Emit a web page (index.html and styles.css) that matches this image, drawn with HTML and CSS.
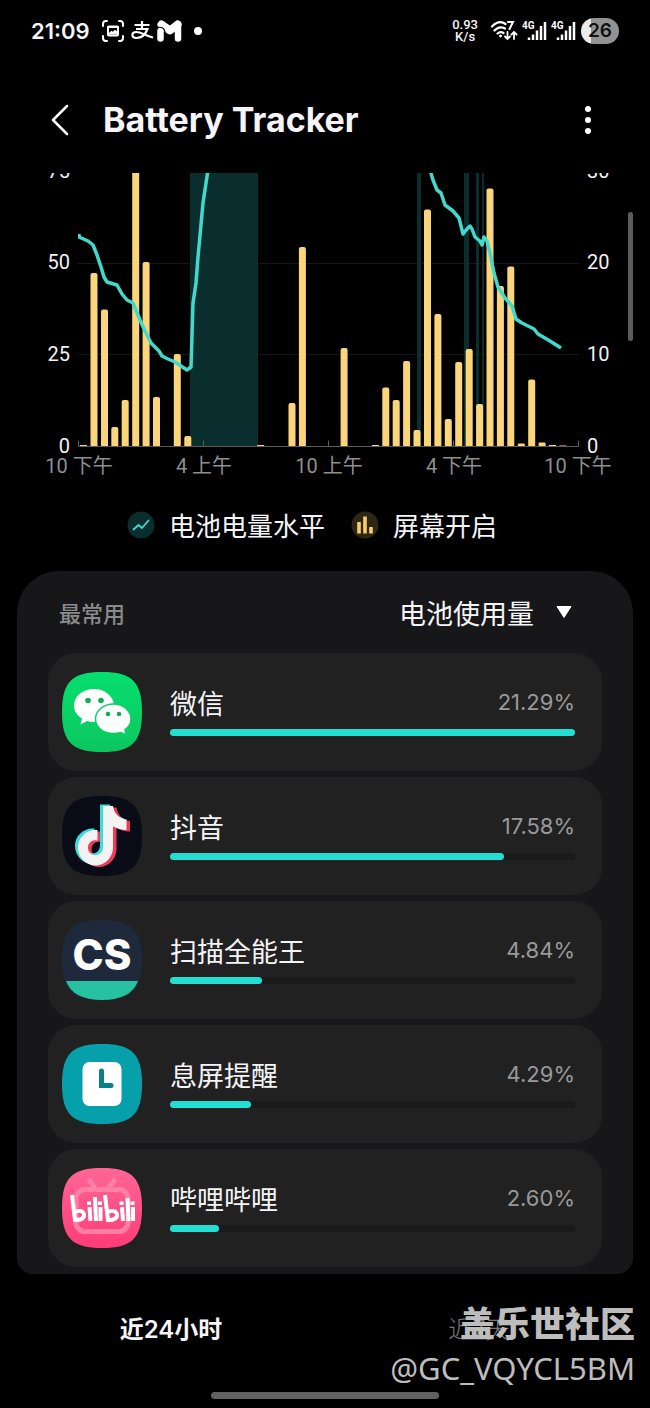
FILE: index.html
```html
<!doctype html>
<html lang="zh-CN">

<head>
    <meta charset="UTF-8">
    <meta name="viewport" content="width=device-width, initial-scale=1">
    <title>Battery Tracker</title>
    <link rel="stylesheet" href="styles.css">
</head>

<body>
    <!-- 状态栏 -->
    <div class="status-bar">
        <span class="clock">21:09</span>
        <svg class="icon-shot" width="22" height="22" viewBox="0 0 22 22" fill="none" stroke="#fff" stroke-width="2" stroke-linecap="round">
            <path d="M1 6V4q0-3 3-3h1M17 1h1q3 0 3 3v2M21 16v2q0 3-3 3h-1M5 21H4q-3 0-3-3v-2"/>
            <rect x="6" y="6.500" width="10" height="9" rx="1"/>
            <path d="M6 7h10M8 13.500l1.500-1.500 1.500 1 2-2 2 1.500v1z" fill="#fff"/>
        </svg>
        <svg class="icon-pay" width="24" height="20" viewBox="0 0 24 20" fill="none" stroke="#fff" stroke-width="2.200">
            <path d="M3.500 4h15M11 0v8M5 8h11.500Q13 17 5.500 17C0 17 0 11 5.500 11c4 0 8 3 16.500 5.500"/>
        </svg>
        <svg class="icon-m" width="25" height="22" viewBox="0 0 25 22">
            <path d="M3.500 11v7.500M21 4v14.500" stroke="#fff" stroke-width="6.500" stroke-linecap="round"/>
            <path d="M4.500 4.500l8.500 6 7.500-6" fill="none" stroke="#fff" stroke-width="8" stroke-linecap="round" stroke-linejoin="round"/>
            <path d="M0 7.500c5-1 7.500 1 8 4.500" fill="none" stroke="#000" stroke-width="1.200"/>
        </svg>
        <i class="dot"></i>
        <span class="speed">0.93<br>K/s</span>
        <svg class="icon-wifi" width="28" height="22" viewBox="0 0 28 22" fill="none" stroke="#fff" stroke-width="2.200" stroke-linecap="round">
            <path d="M2 6.500Q9-.5 15.500 4M4.500 10.500q4.500-5 10.500-2M7.500 13.500q3-2.500 6-.5"/>
            <circle cx="10.500" cy="16" r="1" fill="#fff" stroke-width="1"/>
            <path d="M18 2h5l-3.500 7" stroke-width="2"/>
            <path d="M17.500 12v7m-2.500-2.500l2.500 2.500 2.500-2.500M24 19v-7m-2.500 2.500l2.500-2.500 2.500 2.500" stroke-width="1.800"/>
        </svg>
        <svg class="icon-signal" width="25" height="22" viewBox="0 0 25 22">
            <text x="0" y="9">4G</text>
            <path d="M7 20v-2.500M11 20v-5.500M15 20v-9.500M19 20V6M23 20V2" stroke="#fff" stroke-width="2.500"/>
        </svg>
        <svg class="icon-signal" width="25" height="22" viewBox="0 0 25 22">
            <text x="0" y="9">4G</text>
            <path d="M7 20v-2.500M11 20v-5.500M15 20v-9.500M19 20V6M23 20V2" stroke="#fff" stroke-width="2.500"/>
        </svg>
        <span class="battery">26</span>
    </div>

    <!-- 标题栏 -->
    <header class="header">
        <button class="icon-btn" type="button" aria-label="返回">
            <svg width="20" height="34" viewBox="0 0 20 34" fill="none" stroke="#fff" stroke-width="2.500" stroke-linecap="round" stroke-linejoin="round">
                <path d="M17 3L3 17 17 31"/>
            </svg>
        </button>
        <h1>Battery Tracker</h1>
        <button class="icon-btn" type="button" aria-label="更多">
            <svg width="6" height="28" viewBox="0 0 6 28" fill="#fff">
                <circle cx="3" cy="3" r="3"/><circle cx="3" cy="14" r="3"/><circle cx="3" cy="25" r="3"/>
            </svg>
        </button>
    </header>

    <main class="content">
        <!-- 图表：左轴为电量，右轴为亮屏分钟数，每半小时一根柱子 -->
        <svg class="chart" viewBox="0 173 650 307">
            <defs>
                <clipPath id="plot"><rect x="78" y="173" width="501" height="273"/></clipPath>
            </defs>
            <path class="grid" d="M78 263.500h501M78 354.500h501"/>
            <g class="charging">
                <rect x="190" y="173" width="68" height="273"/>
                <rect x="417" y="173" width="4" height="273"/>
                <rect x="464" y="173" width="5" height="273"/>
                <rect x="476" y="173" width="3" height="273"/>
                <rect x="482" y="173" width="2" height="273"/>
            </g>
            <path class="axis" d="M78.500 440.500v6h500v-6M203.500 440.500v6M328.500 440.500v6M453.500 440.500v6"/>
            <g class="bars" clip-path="url(#plot)">
                <rect x="80" y="445" width="7" height="9"/>
                <rect x="90.500" y="273" width="7" height="180" rx="2"/>
                <rect x="101" y="309.500" width="7" height="150" rx="2"/>
                <rect x="111.300" y="427" width="7" height="30" rx="2"/>
                <rect x="121.700" y="400" width="7" height="60" rx="2"/>
                <rect x="132.200" y="160" width="7" height="300" rx="2"/>
                <rect x="142.600" y="262" width="7" height="200" rx="2"/>
                <rect x="153" y="397" width="7" height="60" rx="2"/>
                <rect x="173.800" y="354" width="7" height="100" rx="2"/>
                <rect x="184.300" y="436" width="7" height="20" rx="2"/>
                <rect x="257.200" y="445" width="7" height="9"/>
                <rect x="288.500" y="403" width="7" height="50" rx="2"/>
                <rect x="298.900" y="247" width="7" height="210" rx="2"/>
                <rect x="340.600" y="348" width="7" height="110" rx="2"/>
                <rect x="371.900" y="445" width="7" height="9"/>
                <rect x="382.300" y="387.500" width="7" height="70" rx="2"/>
                <rect x="392.700" y="400" width="7" height="60" rx="2"/>
                <rect x="403.100" y="361" width="7" height="100" rx="2"/>
                <rect x="413.500" y="430" width="7" height="30" rx="2"/>
                <rect x="424" y="209.500" width="7" height="250" rx="2"/>
                <rect x="434.400" y="314" width="7" height="150" rx="2"/>
                <rect x="444.800" y="419" width="7" height="40" rx="2"/>
                <rect x="455.200" y="362" width="7" height="100" rx="2"/>
                <rect x="465.700" y="349" width="7" height="110" rx="2"/>
                <rect x="476.100" y="404" width="7" height="60" rx="2"/>
                <rect x="486.500" y="188.500" width="7" height="270" rx="2"/>
                <rect x="496.900" y="286" width="7" height="170" rx="2"/>
                <rect x="507.300" y="266.500" width="7" height="190" rx="2"/>
                <rect x="517.800" y="443.500" width="7" height="9" rx="1"/>
                <rect x="528.200" y="379.500" width="7" height="80" rx="2"/>
                <rect x="538.600" y="442.500" width="7" height="9" rx="1"/>
                <rect x="549" y="445" width="7" height="9"/>
                <rect x="559.400" y="445.500" width="7" height="9"/>
            </g>
            <g class="level" clip-path="url(#plot)">
                <polyline points="79,234 79,237 88,241 93,245 97,255 101,267 104,277 107,282 117,285 122,294 127,300 133,303 140,320 145,331 151,343 159,351 162,356 168,359 175,362 187,370 191,367 193,303 196,283 198,257 203,203 208,170"/>
                <polyline points="430,170 433,180 437,190 441,193 445,205 453,211 459,218 463,234 467,229 470,226 472,229 475,237 480,241 482,245 484,237 487,241 490,253 494,273 498,287 505,298 512,306 516,319 522,323 534,329 538,334 550,341 561,348"/>
            </g>
            <g class="labels labels-left">
                <text x="70" y="178">75</text>
                <text x="70" y="269">50</text>
                <text x="70" y="361">25</text>
                <text x="70" y="453">0</text>
            </g>
            <g class="labels">
                <text x="587" y="178">30</text>
                <text x="587" y="269">20</text>
                <text x="587" y="361">10</text>
                <text x="587" y="453">0</text>
            </g>
            <g class="labels labels-time">
                <text x="79" y="473">10 下午</text>
                <text x="204" y="473">4 上午</text>
                <text x="329" y="473">10 上午</text>
                <text x="454" y="473">4 下午</text>
                <text x="578" y="473">10 下午</text>
            </g>
        </svg>

        <div class="legend">
            <span class="legend-item">
                <svg width="28" height="28" viewBox="0 0 28 28">
                    <circle cx="14" cy="14" r="13.500" fill="#0a2e2d"/>
                    <path d="M6.500 18.500l5-4.500 3.500 3 6.500-7.500" fill="none" stroke="#45d8cc" stroke-width="1.800" stroke-linecap="round" stroke-linejoin="round"/>
                </svg>
                电池电量水平
            </span>
            <span class="legend-item">
                <svg width="28" height="28" viewBox="0 0 28 28">
                    <circle cx="14" cy="14" r="13.500" fill="#2f2614"/>
                    <path d="M8 11v11.500M14 5.500v17M20 16v6.500" stroke="#f8cf6c" stroke-width="3.600"/>
                </svg>
                屏幕开启
            </span>
        </div>

        <section class="panel">
            <div class="panel-head">
                <h2>最常用</h2>
                <button class="sort" type="button">电池使用量
                    <svg width="16" height="12" viewBox="0 0 16 12"><path d="M1 .5h14L8 11.500z" fill="#fff" stroke="#fff" stroke-linejoin="round"/></svg>
                </button>
            </div>

            <ul class="apps">
                <li class="app">
                    <svg class="app-icon" viewBox="0 0 80 80">
                        <defs>
                            <linearGradient id="green" x2="0" y2="1"><stop stop-color="#06df6e"/><stop offset="1" stop-color="#0cc660"/></linearGradient>
                        </defs>
                        <path d="M40 0C70 0 80 10 80 40S70 80 40 80 0 70 0 40 10 0 40 0z" fill="url(#green)"/>
                        <path d="M32 17c11 0 20 7.500 20 17S43 50 32 50q-4 0-7-1l-6.500 3.500 1.500-6C15 43.500 12 39 12 33.500 12 24 21 17 32 17z" fill="#fff"/>
                        <path d="M51.500 32C61 32 69 38.500 69 47c0 4-2 8-6 10.500l1 5.500-5-2.500q-3.500 1-7.500 1C41 61.500 33.500 55 33.500 47S41 32 51.500 32z" fill="#fff" stroke="#09d067" stroke-width="1.500"/>
                        <g fill="#10ad59"><circle cx="26" cy="28.500" r="2.800"/><circle cx="39" cy="28.500" r="2.800"/><circle cx="46" cy="42" r="2.300"/><circle cx="57" cy="42" r="2.300"/></g>
                    </svg>
                    <div class="app-info">
                        <div class="app-line"><span class="name">微信</span><span class="percent">21.29%</span></div>
                        <div class="track"><div class="fill" style="width: 100%"></div></div>
                    </div>
                </li>
                <li class="app">
                    <svg class="app-icon" viewBox="0 0 80 80">
                        <defs>
                            <path id="note" d="M40.500 9.500h10c1 7.500 6 12.500 13.500 13.500v10.500c-5 0-10-1.500-13.500-4V51c0 10-8 18-17.500 18s-17.500-8-17.500-18S24 32.500 35 33.500V44c-5-1.500-9.500 2-9.500 7s3.500 7.500 7.500 7.500 7.500-3 7.500-8z"/>
                        </defs>
                        <path d="M40 0C70 0 80 10 80 40S70 80 40 80 0 70 0 40 10 0 40 0z" fill="#090b17"/>
                        <use href="#note" x="4" y="2" fill="#ee3a5b"/>
                        <use href="#note" x="-2.500" y="-1" fill="#39dfd6"/>
                        <use href="#note" x="0.500" y="0.500" fill="#f3f3f3"/>
                    </svg>
                    <div class="app-info">
                        <div class="app-line"><span class="name">抖音</span><span class="percent">17.58%</span></div>
                        <div class="track"><div class="fill" style="width: 82.500%"></div></div>
                    </div>
                </li>
                <li class="app">
                    <svg class="app-icon" viewBox="0 0 80 80">
                        <path d="M40 0C70 0 80 10 80 40S70 80 40 80 0 70 0 40 10 0 40 0z" fill="#1e2a3b"/>
                        <path d="M4 61h72Q69 80 40 80T4 61z" fill="#27c2a1"/>
                        <text class="cs" x="40" y="50">CS</text>
                    </svg>
                    <div class="app-info">
                        <div class="app-line"><span class="name">扫描全能王</span><span class="percent">4.84%</span></div>
                        <div class="track"><div class="fill" style="width: 22.600%"></div></div>
                    </div>
                </li>
                <li class="app">
                    <svg class="app-icon" viewBox="0 0 80 80">
                        <path d="M40 0C70 0 80 10 80 40S70 80 40 80 0 70 0 40 10 0 40 0z" fill="#06a0aa"/>
                        <rect x="20.500" y="18" width="39" height="44" rx="7" fill="#fff"/>
                        <path d="M39.500 27v14.500H49" fill="none" stroke="#078087" stroke-width="5" stroke-linecap="round"/>
                    </svg>
                    <div class="app-info">
                        <div class="app-line"><span class="name">息屏提醒</span><span class="percent">4.29%</span></div>
                        <div class="track"><div class="fill" style="width: 20.100%"></div></div>
                    </div>
                </li>
                <li class="app">
                    <svg class="app-icon" viewBox="0 0 80 80">
                        <defs>
                            <linearGradient id="pink" x2="0" y2="1"><stop stop-color="#ff6698"/><stop offset="1" stop-color="#ff3c77"/></linearGradient>
                        </defs>
                        <path d="M40 0C70 0 80 10 80 40S70 80 40 80 0 70 0 40 10 0 40 0z" fill="url(#pink)"/>
                        <g fill="none" stroke="#ff80a6" stroke-width="5" stroke-linecap="round"><rect x="14" y="21.500" width="52" height="42" rx="9"/><path d="M28 13l4 6M52 13l-5 6"/></g>
                        <g fill="none" stroke="#fff" stroke-width="4">
                            <path d="M10 27l3 25q10 0 9-6-2-5-9-2M43 27l3 25q10 0 9-6-2-5-9-2"/>
                            <path d="M27.500 39l1 14M33 29l1 24M38.500 39v14M60 39l1 14M65.500 30l1 23M71 39v14"/>
                            <path d="M27 33.500v3.500M38 33.500v3.500M59.500 33.500v3.500M70.500 33.500v3.500"/>
                        </g>
                    </svg>
                    <div class="app-info">
                        <div class="app-line"><span class="name">哔哩哔哩</span><span class="percent">2.60%</span></div>
                        <div class="track"><div class="fill" style="width: 12.200%"></div></div>
                    </div>
                </li>
            </ul>
        </section>
        <i class="scrollbar"></i>
    </main>

    <!-- 底部切换 -->
    <footer class="footer">
        <nav class="tabs">
            <button class="tab active" type="button">近24小时</button>
            <button class="tab" type="button">近7天</button>
        </nav>
        <i class="home-bar"></i>
        <div class="watermark">
            <strong>盖乐世社区</strong>
            <span>@GC_VQYCL5BM</span>
        </div>
    </footer>
</body>

</html>
```
FILE: styles.css
```css
* {
    box-sizing: border-box;
}
body {
    margin: 0;
    background-color: #000;
    color: #f5f5f7;
    font-family: Inter, "Noto Sans CJK SC", sans-serif;
}
button {
    padding: 0;
    border: 0;
    background: none;
    color: inherit;
    font: inherit;
}
svg {
    display: block;
    flex: none;
}

/* 状态栏 */
.status-bar {
    display: flex;
    align-items: center;
    height: 62px;
    padding: 0 31px;
}
.clock {
    margin-right: 12px;
    font-size: 22px;
    font-weight: 600;
}
.icon-pay {
    margin-left: 7px;
}
.icon-m {
    margin-left: 2px;
}
.dot {
    width: 8px;
    height: 8px;
    margin-left: 12px;
    border-radius: 50%;
    background-color: #fff;
}
.speed {
    margin: 0 12px 0 auto;
    font: 500 13px/12px Roboto, sans-serif;
    text-align: center;
}
.icon-signal {
    margin-left: 4px;
    fill: #fff;
    font: 700 10px Roboto, sans-serif;
}
.battery {
    width: 38px;
    height: 26px;
    margin-left: 5px;
    border-radius: 13px;
    background: linear-gradient(to right, #ececec 10px, #929292 10px);
    color: #111;
    font-size: 19px;
    font-weight: 600;
    line-height: 26px;
    text-align: center;
}

/* 标题栏 */
.header {
    display: flex;
    align-items: center;
    height: 111px;
    padding: 4px 40px 0;
}
.header h1 {
    flex: 1;
    margin: 0 0 0 23px;
    font-size: 34px;
    font-weight: 700;
}
.icon-btn {
    display: flex;
    justify-content: center;
    width: 40px;
}
.icon-btn:last-child {
    width: 44px;
}

/* 图表 */
.content {
    position: relative;
}
.chart {
    width: 100%;
    overflow: hidden;
}
.grid {
    stroke: #161616;
}
.charging {
    fill: #0a2e2d;
}
.axis {
    fill: none;
    stroke: #5c5c5c;
}
.bars {
    fill: #fad57a;
}
.level {
    fill: none;
    stroke: #41d9cb;
    stroke-width: 3.5;
    stroke-linejoin: round;
}
.labels {
    fill: #f2f2f2;
    font: 20px Roboto, "Noto Sans CJK SC", sans-serif;
}
.labels-left {
    text-anchor: end;
}
.labels-time {
    fill: #8f8f8f;
    text-anchor: middle;
}
.legend {
    display: flex;
    justify-content: center;
    gap: 26px;
    padding: 27px 26px 24px 0;
}
.legend-item {
    display: flex;
    align-items: center;
    gap: 14px;
    font-size: 26px;
    line-height: 40px;
}
.legend-item svg {
    margin-bottom: 4px;
}

/* 应用列表 */
.panel {
    margin: 0 17px;
    padding: 0 31px 7px;
    border-radius: 42px 42px 16px 16px;
    background-color: #17171a;
}
.panel-head {
    display: flex;
    justify-content: space-between;
    align-items: center;
    height: 82px;
    padding: 0 30px 0 11px;
}
.panel-head h2 {
    margin: 0;
    color: #8a8a8a;
    font-size: 22px;
    font-weight: 500;
}
.sort {
    display: flex;
    align-items: center;
    gap: 22px;
    font-size: 27px;
}
.apps {
    display: grid;
    gap: 6px;
    margin: 0;
    padding: 0;
    list-style: none;
}
.app {
    display: flex;
    align-items: flex-start;
    gap: 28px;
    height: 118px;
    padding: 19px 27px 0 14px;
    border-radius: 28px;
    background-color: #212121;
}
.app-icon {
    width: 80px;
    height: 80px;
}
.app-info {
    flex: 1;
    padding-top: 15px;
}
.app-line {
    display: flex;
    justify-content: space-between;
    height: 36px;
}
.name {
    font-size: 27px;
    line-height: 36px;
}
.percent {
    color: #999;
    font-size: 22px;
    line-height: 30px;
}
.track {
    height: 7px;
    margin-top: 6px;
    border-radius: 4px;
    background-color: #1a1a1a;
}
.fill {
    height: 7px;
    border-radius: 4px;
    background-color: #24ded3;
}
.cs {
    fill: #fff;
    font: 800 42px Inter, sans-serif;
    text-anchor: middle;
}
.scrollbar {
    position: absolute;
    top: 39px;
    right: 17px;
    width: 5px;
    height: 129px;
    border-radius: 3px;
    background-color: #5c5c5c;
}

/* 底部 */
.footer {
    position: relative;
    height: 134px;
}
.tabs {
    display: grid;
    grid-template-columns: 1fr 1fr;
    padding: 38px 17px 0;
}
.tab {
    color: #777;
    font-size: 24px;
    font-weight: 300;
    line-height: 36px;
}
.tab.active {
    color: #f5f5f7;
    font-weight: 600;
}
.home-bar {
    display: block;
    width: 35%;
    height: 7px;
    margin: 44px auto 0;
    border-radius: 4px;
    background-color: #616161;
}
.watermark {
    position: absolute;
    top: 28px;
    right: 15px;
    color: #bdbdbd;
    text-align: right;
}
.watermark strong {
    display: block;
    font-size: 35px;
    font-weight: 900;
    line-height: 44px;
}
.watermark span {
    font: 31px/44px "Noto Sans", sans-serif;
}
```
